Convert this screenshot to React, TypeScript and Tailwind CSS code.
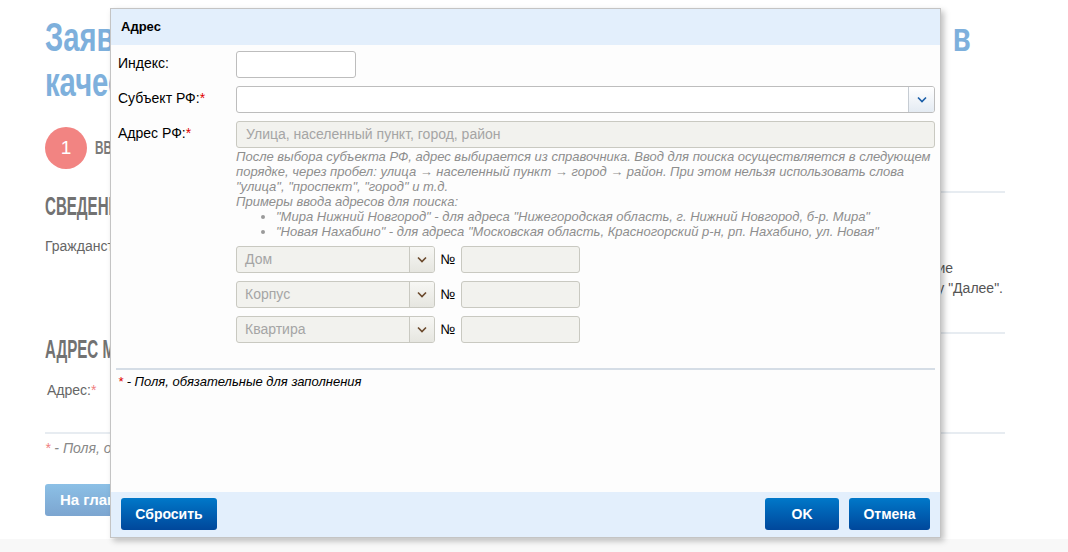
import React from "react";

const sans = { fontFamily: '"Liberation Sans", Arial, sans-serif' };

function Chevron({ color }: { color: string }) {
  return (
    <svg width="10" height="7" viewBox="0 0 10 7" fill="none">
      <path d="M1 1.5 5 5.5 9 1.5" stroke={color} strokeWidth="1.6" />
    </svg>
  );
}

// narrow headline face: no condensed font is installed, so squeeze Liberation Sans Bold
function Narrow({ children, className }: { children: React.ReactNode; className?: string }) {
  return <span className={"inline-block whitespace-nowrap " + (className ?? "")}>{children}</span>;
}

function NumberRow({ placeholder }: { placeholder: string }) {
  return (
    <div className="flex items-center h-[27px]">
      <div className="flex w-[199px] h-[27px] border border-[#c9c9c1] rounded-[3px] bg-[#f2f2ee] overflow-hidden">
        <div className="flex-1 flex items-center px-[8px] text-[14px] text-[#a5a5a5]">
          {placeholder}
        </div>
        <div className="w-[25px] border-l border-[#c9c9c1] bg-gradient-to-b from-[#f7f7f4] to-[#e6e6e0] flex items-center justify-center">
          <Chevron color="#6b4a2d" />
        </div>
      </div>
      <span className="w-[26px] text-center text-[14px] text-black">№</span>
      <div className="w-[119px] h-[27px] border border-[#c9c9c1] rounded-[3px] bg-[#f2f2ee]" />
    </div>
  );
}

function BlueButton({ children, className }: { children: React.ReactNode; className?: string }) {
  return (
    <button
      className={
        "h-[32px] rounded-[3px] bg-gradient-to-b from-[#0078c9] to-[#00479b] text-white font-bold text-[14px] " +
        (className ?? "")
      }
    >
      {children}
    </button>
  );
}

function Required() {
  return <span className="text-[#e00000]">*</span>;
}

function AddressModal() {
  return (
    <div
      style={sans}
      className="absolute left-[110px] top-[8px] w-[831px] h-[530px] flex flex-col bg-[#fdfdfd] border border-[#c4c4c4] shadow-[3px_3px_6px_rgba(0,0,0,0.25)]"
    >
      <div className="h-[36px] shrink-0 bg-[#e3effc] flex items-center px-[10px] text-[13px] font-bold text-black">
        Адрес
      </div>

      <div className="flex-1 px-[5px] pt-[6px]">
        <div className="grid grid-cols-[118px_1fr] gap-y-[8px] pl-[2px]">
          <div className="pt-[2px] text-[14px] leading-[20px] text-black">Индекс:</div>
          <div className="w-[120px] h-[27px] border border-[#bdbdbd] rounded-[3px] bg-white" />

          <div className="pt-[2px] text-[14px] leading-[20px] text-black">
            Субъект РФ:<Required />
          </div>
          <div className="flex h-[27px] border border-[#bdbdbd] rounded-[3px] bg-white overflow-hidden">
            <div className="flex-1" />
            <div className="w-[26px] border-l border-[#c6ccd3] bg-gradient-to-b from-[#ffffff] to-[#e4ebf3] flex items-center justify-center">
              <Chevron color="#1a5ea8" />
            </div>
          </div>

          <div className="pt-[2px] text-[14px] leading-[20px] text-black">
            Адрес РФ:<Required />
          </div>
          <div>
            <div className="h-[27px] border border-[#c9c9c1] rounded-[3px] bg-[#f2f2ee] flex items-center px-[9px] text-[14px] text-[#a5a5a5]">
              Улица, населенный пункт, город, район
            </div>
            <div className="pt-[1px] text-[13px] leading-[15px] italic text-[#8e8e8e]">
              <p>
                После выбора субъекта РФ, адрес выбирается из справочника. Ввод для поиска осуществляется в следующем
                порядке, через пробел: улица → населенный пункт → город → район. При этом нельзя использовать слова
                "улица", "проспект", "город" и т.д.
              </p>
              <p>Примеры ввода адресов для поиска:</p>
              <ul className="list-disc pl-[40px] marker:text-[#9a9a9a]">
                <li>"Мира Нижний Новгород" - для адреса "Нижегородская область, г. Нижний Новгород, б-р. Мира"</li>
                <li>"Новая Нахабино" - для адреса "Московская область, Красногорский р-н, рп. Нахабино, ул. Новая"</li>
              </ul>
            </div>
            <div className="flex flex-col gap-[8px] mt-[7px]">
              <NumberRow placeholder="Дом" />
              <NumberRow placeholder="Корпус" />
              <NumberRow placeholder="Квартира" />
            </div>
          </div>
        </div>

        <div className="mt-[25px] h-[2px] bg-[#d5dde6]" />
        <p className="mt-[4px] pl-[2px] text-[13px] leading-[16px] italic text-black">
          <Required /> - Поля, обязательные для заполнения
        </p>
      </div>

      <div className="h-[45px] shrink-0 bg-[#e3effc] flex items-start justify-between pt-[6px] px-[10px]">
        <BlueButton className="w-[96px]">Сбросить</BlueButton>
        <div className="flex gap-[10px]">
          <BlueButton className="w-[74px]">OK</BlueButton>
          <BlueButton className="w-[81px]">Отмена</BlueButton>
        </div>
      </div>
    </div>
  );
}

export default function App() {
  return (
    <div className="relative w-[1068px] h-[552px] overflow-hidden bg-white" style={sans}>
      <div className="pl-[45px] w-[1005px]">
        <h1 className="mt-[15px] text-[40px] leading-[45px] font-bold text-[#7eb0dc]">
          <div className="flex justify-between w-[926px]">
            <Narrow className="origin-left scale-x-[0.73]">Заявление о постановке на учёт</Narrow>
            <Narrow className="origin-right scale-x-[0.73]">в</Narrow>
          </div>
          <div>
            <Narrow className="origin-left scale-x-[0.73]">качестве плательщика</Narrow>
          </div>
        </h1>

        <div className="mt-[22px] flex items-center gap-[8px]">
          <div className="w-[42px] h-[42px] rounded-full bg-[#f28482] flex items-center justify-center text-white text-[19px]">
            1
          </div>
          <Narrow className="origin-left scale-x-[0.62] text-[19px] font-bold text-[#7a7a7a] uppercase">
            Ввод сведений
          </Narrow>
        </div>

        <div className="mt-[22px] flex">
          <div className="flex-1">
            <h2 className="text-[26px] leading-[30px] font-bold text-[#727272] uppercase">
              <Narrow className="origin-left scale-x-[0.58]">Сведения о заявителе</Narrow>
            </h2>
            <p className="mt-[15px] text-[14px] leading-[20px] text-[#666]">Гражданство</p>
          </div>
          <div className="w-[300px] h-[143px] border-t-2 border-b-2 border-[#e7ecf1] pt-[65px] text-[14px] leading-[20px] text-[#555]">
            <div className="text-right pr-[52px]">обратитесь в учреждение</div>
            <div className="text-right pr-[2px]">иначе нажмите кнопку "Далее".</div>
          </div>
        </div>

        <h2 className="text-[26px] leading-[30px] font-bold text-[#727272] uppercase">
          <Narrow className="origin-left scale-x-[0.58]">Адрес места жительства</Narrow>
        </h2>
        <p className="mt-[16px] pl-[2px] text-[14px] leading-[20px] text-[#666]">
          Адрес:<span className="text-[#f08080]">*</span>
        </p>
        <div className="mt-[32px] h-[2px] bg-[#e7ecf1]" />
        <p className="mt-[4px] text-[14px] leading-[20px] italic text-[#888]">
          <span className="text-[#f08080]">*</span> - Поля, обязательные для заполнения
        </p>
        <button className="mt-[26px] h-[32px] px-[15px] rounded-[3px] bg-gradient-to-b from-[#8cc0e6] to-[#7ca5d0] text-white font-bold text-[15px]">
          На главную
        </button>
      </div>
      <div className="mt-[23px] h-[20px] bg-[#f8f8f8]" />

      <AddressModal />
    </div>
  );
}
